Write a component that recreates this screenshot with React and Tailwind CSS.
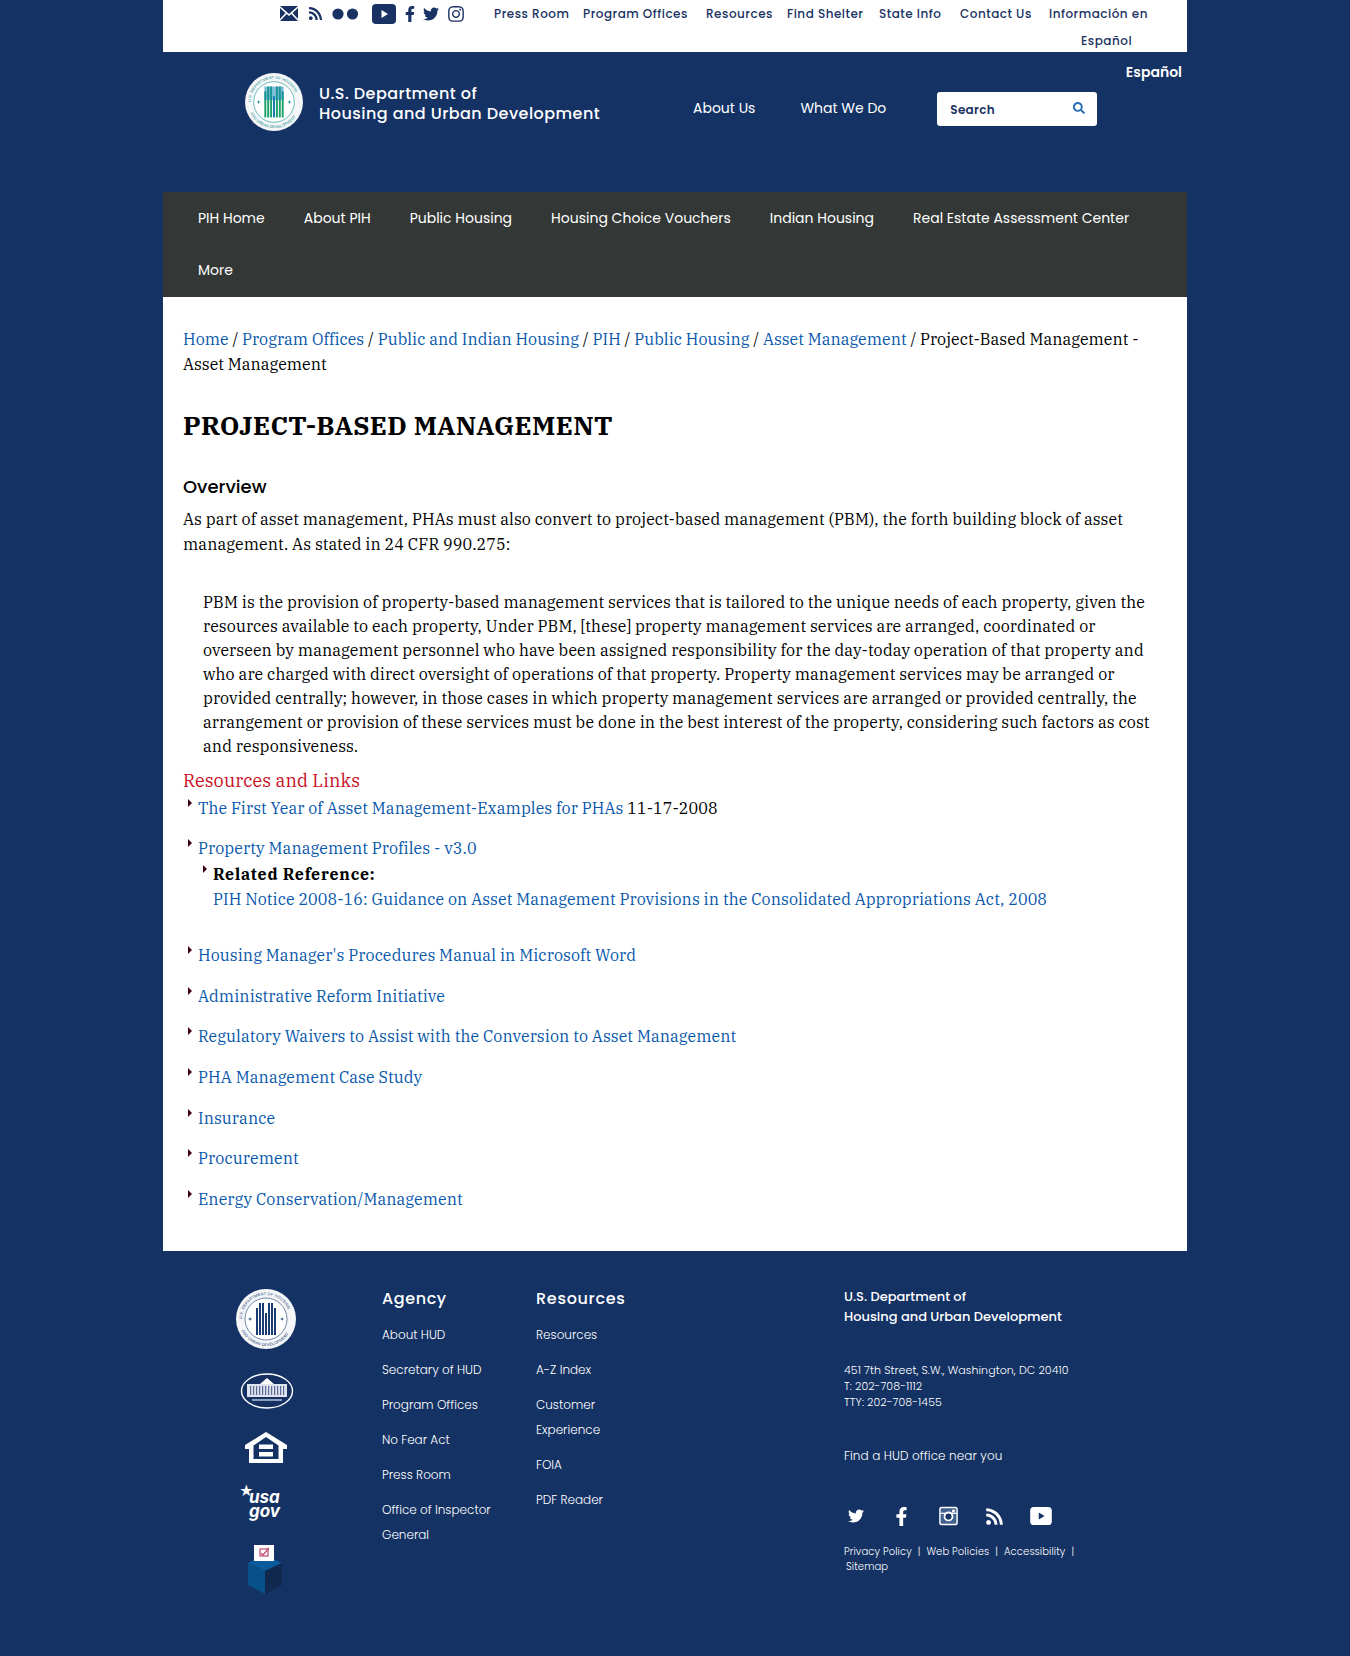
import React from "react";
import { FaRss, FaFacebookF, FaTwitter, FaInstagram, FaSearch } from "react-icons/fa";

const pop = "font-['Poppins','Inter','Noto_Sans',sans-serif]";

function Seal({ size, color, id, bars }) {
  return (
    <svg width={size} height={size} viewBox="0 0 60 60">
      <defs>
        <path id={id + "t"} d="M30 30 m-24 0 a24 24 0 1 1 48 0" />
        <path id={id + "b"} d="M30 30 m-27 0 a27 27 0 0 0 54 0" />
      </defs>
      <circle cx="30" cy="30" r="30" fill="#f4f6f8" />
      <circle cx="30" cy="30" r="21" fill="#fff" stroke={color} strokeWidth="0.6" />
      <text fontSize="4" fill={color} fontFamily="Liberation Sans" letterSpacing="0.1">
        <textPath href={`#${id}t`}>U.S. DEPARTMENT OF HOUSING</textPath>
      </text>
      <text fontSize="4" fill={color} fontFamily="Liberation Sans" letterSpacing="0.1">
        <textPath href={`#${id}b`} startOffset="14%">AND URBAN DEVELOPMENT</textPath>
      </text>
      {[20, 23, 26, 29, 32, 35, 38].map((x, i) => (
        <rect key={x} x={x} y={i === 3 ? 24 : i % 6 === 0 ? 19 : 14} width="2" height={i === 3 ? 22 : i % 6 === 0 ? 27 : 32} fill={bars ? (i === 3 ? "#0d7ab0" : bars) : color} />
      ))}
      {bars && <rect x="20" y="14" width="20" height="14" fill="#1588b8" opacity="0.55" />}
      <path d="M12 30 l1.6 -.5 .5 -1.6 .5 1.6 1.6 .5 -1.6 .5 -.5 1.6 -.5 -1.6z" fill={color} />
      <path d="M44 30 l1.6 -.5 .5 -1.6 .5 1.6 1.6 .5 -1.6 .5 -.5 1.6 -.5 -1.6z" fill={color} />
    </svg>
  );
}

function WhiteHouse() {
  return (
    <svg width="54" height="38" viewBox="0 0 54 38">
      <ellipse cx="27" cy="19" rx="25.5" ry="17" fill="#142f60" stroke="#fff" strokeWidth="1.4" />
      <rect x="7" y="12" width="40" height="13" fill="#dfe3ee" />
      <path d="M20 12 L27 6 L34 12z" fill="#fff" />
      {[10, 13, 16, 19, 22, 25, 28, 31, 34, 37, 40, 43].map((x) => (
        <rect key={x} x={x} y="14" width="1.2" height="9" fill="#5a6b96" />
      ))}
      <rect x="12" y="27" width="30" height="2" fill="#8e9cbd" />
    </svg>
  );
}

function EqualHousing() {
  return (
    <svg width="42" height="32" viewBox="0 0 42 32" fill="#fff">
      <path fillRule="evenodd" d="M21 0 L42 13 V17 H38 V31 H4 V17 H0 V13z M21 5 L8.5 13.5 V27 H33.5 V13.5z" />
      <rect x="14" y="12.5" width="14" height="4.5" />
      <rect x="14" y="20" width="14" height="4.5" />
    </svg>
  );
}

function Ballot() {
  return (
    <svg width="40" height="50" viewBox="0 0 40 50">
      <path d="M3 19 L20 11 L37 19 L20 27z" fill="#0a5c9c" />
      <path d="M3 19 L20 27 V50 L3 41z" fill="#07508a" />
      <path d="M37 19 L20 27 V50 L37 41z" fill="#11294f" />
      <rect x="9" y="1" width="20" height="16" fill="#fff" />
      <rect x="15" y="5" width="8" height="7" fill="none" stroke="#c04a6a" strokeWidth="1.2" />
      <path d="M16 9 l2 2 l6 -7" fill="none" stroke="#c04a6a" strokeWidth="1.2" />
    </svg>
  );
}

function Flickr() {
  return (
    <svg width="27" height="12" viewBox="0 0 27 12" fill="#1a3263">
      <circle cx="6" cy="6" r="5.6" />
      <circle cx="20.5" cy="6" r="5.6" />
    </svg>
  );
}

function Mail() {
  return (
    <svg width="18" height="15" viewBox="0 0 18 15" fill="#1a3263">
      <path d="M0 0 H18 L9 8z" />
      <path d="M0 2 L5.5 7 L0 13z" />
      <path d="M18 2 L12.5 7 L18 13z" />
      <path d="M6.8 8 L9 10 L11.2 8 L18 15 H0z" />
    </svg>
  );
}

function Yt({ w, h, fg, tri }) {
  return (
    <svg width={w} height={h} viewBox="0 0 24 20">
      <rect x="0" y="0" width="24" height="20" rx="4" fill={fg} />
      <path d="M9.5 6 L16 10 L9.5 14z" fill={tri} />
    </svg>
  );
}

function InstaSquare() {
  return (
    <svg width="19" height="20" viewBox="0 0 21 21" fill="none" stroke="#fff">
      <rect x="1" y="1" width="19" height="19" rx="2" strokeWidth="1.6" fill="#41618f" />
      <path d="M1.5 7.5 H19.5" strokeWidth="1.4" stroke="#fff" />
      <circle cx="10.5" cy="11" r="4.4" strokeWidth="2" fill="#143264" />
      <rect x="14.5" y="3.5" width="3" height="3" fill="#fff" strokeWidth="0" />
    </svg>
  );
}

function Tri({ className }) {
  return <span className={`absolute w-0 h-0 border-y-[4px] border-y-transparent border-l-[4px] border-l-[#40001a] ${className}`} />;
}

function A({ children }) {
  return <a className="text-[#0757ab]">{children}</a>;
}

function Li({ children, cls = "mb-[16.7px]" }) {
  return (
    <li className={`relative pl-[15px] ${cls}`}>
      <Tri className="left-[5px] top-[3px]" />
      {children}
    </li>
  );
}

const topLinks = [
  ["Press Room", "w-[89px]"],
  ["Program Offices", "w-[123px]"],
  ["Resources", "w-[81px]"],
  ["Find Shelter", "w-[92px]"],
  ["State Info", "w-[81px]"],
  ["Contact Us", "w-[89px]"],
];
const mainNav = ["PIH Home", "About PIH", "Public Housing", "Housing Choice Vouchers", "Indian Housing", "Real Estate Assessment Center"];
const agency = ["About HUD", "Secretary of HUD", "Program Offices", "No Fear Act", "Press Room"];
const res = ["Resources", "A-Z Index"];

export default function App() {
  return (
    <div className={`bg-[#143264] min-h-[1656px] ${pop}`}>
      <div className="w-[1024px] ml-[163px]">
        {/* top bar */}
        <div className="bg-white h-[52px] flex items-start text-[#1a3263]">
          <div className="flex items-center h-[27px] ml-[117px] w-[214px] relative">
            <Mail />
            <FaRss className="w-[15px] h-[15px] ml-[10px]" />
            <span className="ml-[9px]"><Flickr /></span>
            <span className="ml-[13px]"><Yt w={24} h={20} fg="#1a3263" tri="#fff" /></span>
            <FaFacebookF className="w-[14px] h-[16px] ml-[7px]" />
            <FaTwitter className="w-[18px] h-[16px] ml-[5px]" />
            <FaInstagram className="w-[18px] h-[18px] ml-[7px]" />
          </div>
          <div className="flex items-start text-[12px] font-medium tracking-[0.5px] leading-[27px]">
            {topLinks.map(([t, w]) => (
              <span key={t} className={`${w} whitespace-nowrap`}>{t}</span>
            ))}
            <div className="whitespace-nowrap">
              <div>Información en</div>
              <div className="pl-[32px]">Español</div>
            </div>
          </div>
        </div>
        {/* header */}
        <div className="h-[140px] relative flex items-start">
          <div className="ml-[82px] mt-[21px]"><Seal size={58} color="#0d8a8c" id="hdr" bars="#1aa06a" /></div>
          <div className="ml-[16px] mt-[32px] text-white text-[16px] leading-[20px] tracking-[0.45px] font-medium w-[300px] whitespace-nowrap">
            U.S. Department of<br />Housing and Urban Development
          </div>
          <div className="ml-[74px] mt-[46px] text-white text-[14px] leading-[20px] flex gap-[45px] whitespace-nowrap">
            <span>About Us</span>
            <span>What We Do</span>
          </div>
          <div className="ml-[51px] mt-[40px] w-[160px] h-[34px] bg-white rounded-[3px] flex items-center justify-between pl-[13px] pr-[12px]">
            <span className="text-[12px] font-semibold tracking-[0.3px] text-[#1a3263] mt-[1px]">Search</span>
            <FaSearch className="w-[12px] h-[12px] text-[#2a6db5] -mt-[3px]" />
          </div>
          <span className="absolute right-[5px] top-[10px] text-white text-[14px] font-semibold">Español</span>
        </div>
        {/* main nav */}
        <div className="bg-[#333735] h-[105px] pl-[35px] text-white text-[14px]">
          <div className="flex h-[53px] items-center gap-[39px] whitespace-nowrap">
            {mainNav.map((t) => <span key={t}>{t}</span>)}
          </div>
          <div className="flex h-[51px] items-center">More</div>
        </div>
        {/* content */}
        <div className="bg-white h-[954px] px-[20px] pt-[30px] font-['IBM_Plex_Serif','Noto_Serif','Liberation_Serif',serif] text-black text-[16px] tracking-[0.1px] leading-[25px]">
          <p className="leading-[25px] tracking-[0.05px]">
            <A>Home</A> / <A>Program Offices</A> / <A>Public and Indian Housing</A> / <A>PIH</A> / <A>Public Housing</A> / <A>Asset Management</A> / Project-Based Management - Asset Management
          </p>
          <h1 className="mt-[32px] text-[26px] leading-[32px] font-bold uppercase tracking-[0.35px]">Project-Based Management</h1>
          <h2 className={`mt-[34px] text-[18px] leading-[24px] font-medium tracking-normal ${pop}`}>Overview</h2>
          <p className="mt-[8px] leading-[24.5px]">
            As part of asset management, PHAs must also convert to project-based management (PBM), the forth building block of asset management. As stated in 24 CFR 990.275:
          </p>
          <p className="mt-[34px] ml-[20px] leading-[24px]">
            PBM is the provision of property-based management services that is tailored to the unique needs of each property, given the resources available to each property, Under PBM, [these] property management services are arranged, coordinated or overseen by management personnel who have been assigned responsibility for the day-today operation of that property and who are charged with direct oversight of operations of that property. Property management services may be arranged or provided centrally; however, in those cases in which property management services are arranged or provided centrally, the arrangement or provision of these services must be done in the best interest of the property, considering such factors as cost and responsiveness.
          </p>
          <h3 className="mt-[10px] text-[18px] leading-[26px] text-[#c8101e] tracking-[0.12px]">Resources and Links</h3>
          <ul className="mt-[2px] leading-[24px]">
            <Li cls="mb-[16px]"><A>The First Year of Asset Management-Examples for PHAs</A> 11-17-2008</Li>
            <Li cls="mb-[32px]">
              <A>Property Management Profiles - v3.0</A>
              <div className="relative pl-[15px] mt-[2px]">
                <Tri className="left-[5px] top-[3px]" />
                <b className="tracking-[0.75px]">Related Reference:</b><br />
                <span className="block mt-[1px]"><A>PIH Notice 2008-16: Guidance on Asset Management Provisions in the Consolidated Appropriations Act, 2008</A></span>
              </div>
            </Li>
            <Li><A>Housing Manager's Procedures Manual in Microsoft Word</A></Li>
            <Li><A>Administrative Reform Initiative</A></Li>
            <Li><A>Regulatory Waivers to Assist with the Conversion to Asset Management</A></Li>
            <Li><A>PHA Management Case Study</A></Li>
            <Li><A>Insurance</A></Li>
            <Li><A>Procurement</A></Li>
            <Li><A>Energy Conservation/Management</A></Li>
          </ul>
        </div>
        {/* footer */}
        <div className="flex items-start text-white pt-[36px]">
          <div className="w-[219px] pl-[73px] flex flex-col pt-[2px]">
            <Seal size={60} color="#1a3a72" id="ftr" />
            <div className="mt-[23px] ml-[4px]"><WhiteHouse /></div>
            <div className="mt-[22px] ml-[9px]"><EqualHousing /></div>
            <div className="mt-[23px] ml-[5px] relative w-[40px] h-[32px] leading-[14px] text-[17px] italic font-bold text-white font-['Inter',sans-serif]">
              <span className="absolute left-[-2px] top-[-3px] text-[14px] not-italic font-normal">★</span>
              <div className="pl-[8px] pt-[3px]">usa<br />gov</div>
            </div>
            <div className="mt-[25px] ml-[9px]"><Ballot /></div>
          </div>
          <div className="w-[154px] text-[12px] font-light">
            <div className="text-[16px] font-medium tracking-[0.6px] leading-[24px]">Agency</div>
            <div className="mt-[11px] leading-[25px] flex flex-col gap-[10px]">
              {agency.map((t) => <span key={t}>{t}</span>)}
              <span className="w-[120px]">Office of Inspector General</span>
            </div>
          </div>
          <div className="w-[308px] text-[12px] font-light">
            <div className="text-[16px] font-medium tracking-[0.7px] leading-[24px]">Resources</div>
            <div className="mt-[11px] leading-[25px] flex flex-col gap-[10px]">
              {res.map((t) => <span key={t}>{t}</span>)}
              <span className="w-[80px]">Customer Experience</span>
              <span>FOIA</span>
              <span>PDF Reader</span>
            </div>
          </div>
          <div className="w-[240px] text-[12px]">
            <div className="text-[13px] font-medium leading-[20px] whitespace-nowrap">U.S. Department of<br />Housing and Urban Development</div>
            <div className="mt-[35px] text-[11px] leading-[16px] font-light tracking-[0.08px] whitespace-nowrap">451 7th Street, S.W., Washington, DC 20410<br />T: 202-708-1112<br />TTY: 202-708-1455</div>
            <div className="mt-[37px] leading-[18px] font-light tracking-[0.1px]">Find a HUD office near you</div>
            <div className="mt-[40px] flex items-center h-[22px] text-white">
              <FaTwitter className="w-[18px] h-[16px] ml-[3px]" />
              <FaFacebookF className="w-[15px] h-[19px] ml-[29px]" />
              <span className="ml-[30px]"><InstaSquare /></span>
              <FaRss className="w-[19px] h-[19px] ml-[27px]" />
              <span className="ml-[26px]"><Yt w={22} h={18} fg="#fff" tri="#143264" /></span>
            </div>
            <div className="mt-[17px] text-[10px] leading-[15px] font-light tracking-[0.1px]">
              <span>Privacy Policy</span><span className="mx-[6px]">|</span><span>Web Policies</span><span className="mx-[6px]">|</span><span>Accessibility</span><span className="mx-[6px]">|</span>
              <div className="pl-[2px]">Sitemap</div>
            </div>
          </div>
        </div>
      </div>
    </div>
  );
}
